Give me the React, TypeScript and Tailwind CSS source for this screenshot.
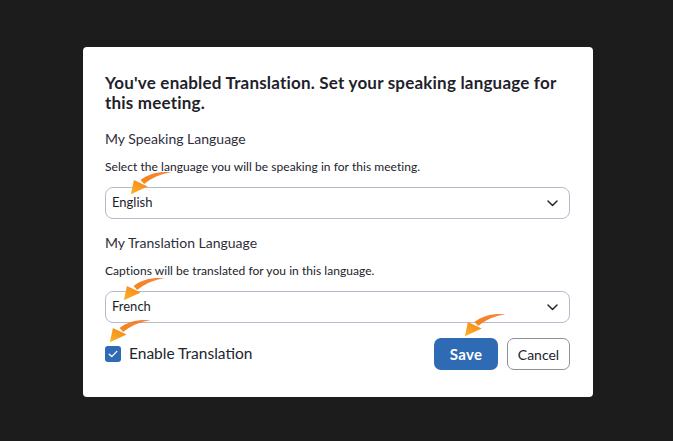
import * as React from 'react';

/**
 * Translation settings dialog
 * Dark backdrop with a white modal asking for speaking / translation language.
 * Orange curved arrows are annotation marks pointing at the controls.
 */

const FONT = { fontFamily: '"Lato", "Noto Sans", "Liberation Sans", sans-serif' };

// curved orange pointer, tip at bottom-left of its box
function Pointer({ className, id }: { className: string; id: string }) {
  return (
    <svg
      className={`absolute pointer-events-none ${className}`}
      width="42"
      height="24"
      viewBox="0 0 38 24"
      preserveAspectRatio="none"
    >
      <defs>
        <linearGradient id={id} x1="1" y1="0" x2="0" y2="1">
          <stop offset="0" stopColor="#f26a1b" stopOpacity="0.8" />
          <stop offset="0.5" stopColor="#f5841f" />
          <stop offset="1" stopColor="#fbb424" />
        </linearGradient>
      </defs>
      <path
        d="M37.5 1.2 C27 0 16.5 2.5 9.5 9 L12.8 13 C19 7 27.5 3 37.5 1.2 Z M0.8 23.2 L3.5 9 L16 15.5 Z"
        fill={`url(#${id})`}
      />
    </svg>
  );
}

function Chevron() {
  return (
    <svg width="11" height="7" viewBox="0 0 11 7" fill="none">
      <path d="M1 1 L5.5 5.5 L10 1" stroke="#2a2a35" strokeWidth="1.5" strokeLinecap="round" strokeLinejoin="round" />
    </svg>
  );
}

function LangSelect({ value }: { value: string }) {
  return (
    <div className="h-8 w-full rounded-lg border border-[#bab8cb] bg-white flex items-center justify-between pl-[6px] pr-[11px]">
      <span className="text-[13px] text-[#1d1d2a]">{value}</span>
      <Chevron />
    </div>
  );
}

export default function App() {
  return (
    <div className="min-h-screen w-full bg-[#1c1c1c] pt-[47px] pl-[83px]" style={FONT}>
      <div className="relative w-[510px] h-[350px] bg-white rounded-[4px] pt-[26px] pl-[22px] pr-[23px]">
        {/* Title */}
        <h1 className="text-[17px] leading-[20px] font-bold text-[#1f1f2d] tracking-[0.2px]">
          You've enabled Translation. Set your speaking language for this meeting.
        </h1>

        {/* Speaking language */}
        <div className="mt-[16px] text-[14px] leading-[20px] text-[#2f2f3c]">My Speaking Language</div>
        <div className="mt-[10px] text-[12px] leading-[16px] text-[#22222c] tracking-[0.05px]">
          Select the language you will be speaking in for this meeting.
        </div>
        <div className="mt-[12px]">
          <LangSelect value="English" />
        </div>

        {/* Translation language */}
        <div className="mt-[14px] text-[14px] leading-[20px] text-[#2f2f3c]">My Translation Language</div>
        <div className="mt-[10px] text-[12px] leading-[16px] text-[#22222c] tracking-[0.05px]">
          Captions will be translated for you in this language.
        </div>
        <div className="mt-[12px]">
          <LangSelect value="French" />
        </div>

        {/* Footer */}
        <div className="mt-[15px] flex items-center justify-between">
          <label className="flex items-center gap-[8px]">
            <span className="w-4 h-4 rounded-[3px] bg-[#2e6bb4] flex items-center justify-center">
              <svg width="10" height="8" viewBox="0 0 10 8" fill="none">
                <path d="M1.2 4.2 L3.8 6.6 L8.8 1.4" stroke="white" strokeWidth="1.3" strokeLinecap="round" strokeLinejoin="round" />
              </svg>
            </span>
            <span className="text-[15.5px] text-[#23232f]">Enable Translation</span>
          </label>
          <div className="flex items-center gap-[9px]">
            <button className="h-8 w-16 rounded-[7px] bg-[#2e6bb4] text-white text-[15px] font-bold tracking-[0.3px]">
              Save
            </button>
            <button className="h-8 w-[63px] rounded-[7px] border border-[#8f8f9c] bg-white text-[14px] text-[#23232f]">
              Cancel
            </button>
          </div>
        </div>

        {/* annotation pointers */}
        <Pointer id="pa" className="left-[47px] top-[124px]" />
        <Pointer id="pb" className="left-[40px] top-[230px]" />
        <Pointer id="pc" className="left-[26px] top-[272px]" />
        <Pointer id="pd" className="left-[381px] top-[266px]" />
      </div>
    </div>
  );
}
